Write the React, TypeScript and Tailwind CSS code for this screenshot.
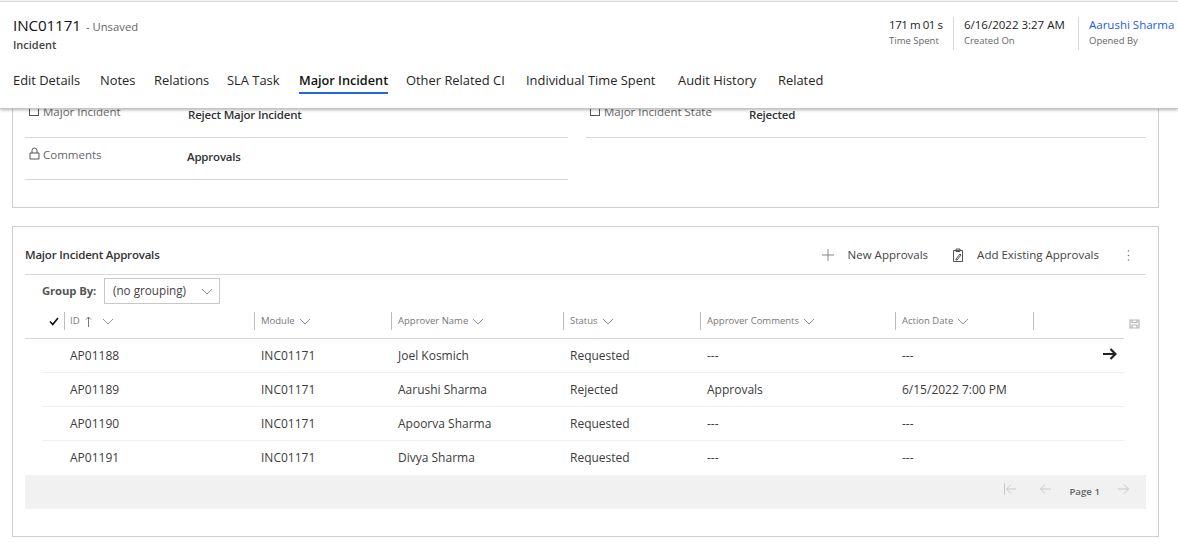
import React from "react";

const F = "font-['Open_Sans','Noto_Sans',sans-serif]";

const Chev = ({ c = "text-[#8a8886]" }: { c?: string }) => (
  <svg width="12" height="7" viewBox="0 0 12 7" className={c} fill="none" stroke="currentColor" strokeWidth="0.9">
    <path d="M1 1l5 5 5-5" />
  </svg>
);

const tabs = ["Edit Details", "Notes", "Relations", "SLA Task", "Major Incident", "Other Related CI", "Individual Time Spent", "Audit History", "Related"];
const tabW = ["w-[87px]", "w-[54px]", "w-[73px]", "w-[72px]", "w-[107px]", "w-[120px]", "w-[152px]", "w-[100px]", "w-[60px]"];

const cols = [
  { n: "Module", w: "w-[137px]" },
  { n: "Approver Name", w: "w-[172px]" },
  { n: "Status", w: "w-[137px]" },
  { n: "Approver Comments", w: "w-[195px]" },
  { n: "Action Date", w: "w-[138px]" },
];

const rows = [
  ["AP01188", "INC01171", "Joel Kosmich", "Requested", "---", "---"],
  ["AP01189", "INC01171", "Aarushi Sharma", "Rejected", "Approvals", "6/15/2022 7:00 PM"],
  ["AP01190", "INC01171", "Apoorva Sharma", "Requested", "---", "---"],
  ["AP01191", "INC01171", "Divya Sharma", "Requested", "---", "---"],
];
const rowW = ["w-[212px] pl-[28px]", "w-[137px] pl-[7px]", "w-[172px] pl-[7px]", "w-[137px] pl-[7px]", "w-[195px] pl-[7px]", "w-[138px] pl-[7px]"];

const Stat = ({ top, sub, blue, w, tight }: { top: string; sub: string; blue?: boolean; w: string; tight?: boolean }) => (
  <div className={`${w} h-[33px] pl-[10px] border-l border-[#d8d8d8] first:border-l-0 first:pl-0`}>
    <div className={`text-[11.5px] leading-[16px] whitespace-nowrap ${tight ? "tracking-[-0.45px] font-medium" : ""} ${blue ? "text-[#1a5ce8]" : "text-[#1b1b1b]"}`}>{top}</div>
    <div className="text-[9.5px] leading-[14px] mt-[1px] text-[#666] whitespace-nowrap">{sub}</div>
  </div>
);

const Arrow = ({ dir, bar }: { dir: "l" | "r"; bar?: boolean }) => (
  <svg width="13" height="12" viewBox="0 0 13 12" fill="none" stroke="#c8c8c8" strokeWidth="1" className="-mt-[6px]">
    {dir === "l" ? <path d={bar ? "M0.5 0.5v11M12 6H3M7 1.5L2.5 6 7 10.5" : "M12 6H1.5M6 1.5L1.5 6 6 10.5"} /> : <path d="M1 6h10.5M7 1.5L11.5 6 7 10.5" />}
  </svg>
);

export default function App() {
  return (
    <div className={`${F} w-[1178px] h-[546px] overflow-hidden bg-white flex flex-col antialiased`}>
      <header className="relative z-10 h-[108px] shrink-0 bg-white border-t border-[#d9d9d9] mt-[1px] border-b-[1px] border-b-[#c4c4c4] shadow-[0_1px_3px_rgba(0,0,0,0.3)]">
        <div className="flex justify-between h-[62px]">
          <div className="pl-[13px] pt-[12px]">
            <div className="flex items-baseline">
              <span className="text-[15.2px] leading-[22px] font-medium tracking-[-0.1px] text-[#111]">INC01171</span>
              <span className="text-[11.3px] ml-[5px] text-[#666]">- Unsaved</span>
            </div>
            <div className="text-[11px] leading-[14px] mt-[2px] font-semibold text-[#444]">Incident</div>
          </div>
          <div className="flex pt-[15px]">
            <Stat top="171 m 01 s" sub="Time Spent" w="w-[64px]" tight />
            <Stat top="6/16/2022 3:27 AM" sub="Created On" w="w-[125px]" />
            <Stat top="Aarushi Sharma" sub="Opened By" blue w="w-[100px]" />
          </div>
        </div>
        <nav className="flex pl-[13px] h-[34px]">
          {tabs.map((t, i) => (
            <div key={t} className={`${tabW[i]} shrink-0 h-[30px] leading-[33px] text-[12.9px] whitespace-nowrap ${i === 4 ? "text-[#111] font-semibold" : "text-[#252525]"}`}>
              <span className={`inline-block h-[30px] ${i === 4 ? "border-b-2 border-[#2266e3] text-[12.7px]" : ""}`}>{t}</span>
            </div>
          ))}
        </nav>
      </header>

      <main className="flex-1 -mt-[40px]">
        <section className="ml-[12px] w-[1147px] h-[139px] border border-[#cfcfcf] pt-[29px] px-[12px]">
          <div className="flex">
            <div className="w-[543px] shrink-0">
              <div className="h-[39px] border-b border-[#d8d8d8] flex items-start pt-[5px] pl-[4px]">
                <span className="w-[10px] h-[9px] border border-[#555] mt-[3px] mr-[4px]" />
                <span className="w-[145px] -mt-[1px] text-[11.5px] text-[#666]">Major Incident</span>
                <span className="text-[11.5px] font-semibold text-[#333] mt-[2px] tracking-[-0.2px]">Reject Major Incident</span>
              </div>
              <div className="h-[42px] border-b border-[#d8d8d8] flex items-start pt-[8px] pl-[4px]">
                <svg width="11" height="13" viewBox="0 0 11 13" fill="none" stroke="#555" className="mr-[3px] mt-[1px]">
                  <path d="M1 6h9v6H1zM3 6V3.5a2.5 2.5 0 015 0V6" />
                </svg>
                <span className="w-[144px] text-[11.5px] text-[#666]">Comments</span>
                <span className="text-[11.5px] font-semibold text-[#333] mt-[2px] tracking-[-0.2px]">Approvals</span>
              </div>
            </div>
            <div className="ml-[18px] w-[560px] h-[39px] border-b border-[#d8d8d8] flex items-start pt-[5px] pl-[4px]">
              <span className="w-[10px] h-[9px] border border-[#555] mt-[3px] mr-[4px]" />
              <span className="w-[145px] -mt-[1px] text-[11.5px] text-[#666]">Major Incident State</span>
              <span className="text-[11.5px] font-semibold text-[#333] mt-[2px] tracking-[-0.2px]">Rejected</span>
            </div>
          </div>
        </section>

        <section className="ml-[12px] mt-[18px] w-[1147px] h-[311px] border border-[#cfcfcf] pt-[15px] px-[12px]">
          <div className="h-[33px] pb-[6px] border-b border-[#d8d8d8] flex items-center justify-between">
            <span className="text-[11.5px] font-semibold text-[#333] tracking-[-0.2px]">Major Incident Approvals</span>
            <div className="flex items-center text-[11.5px] text-[#444] pr-[16px]">
              <svg width="12" height="12" viewBox="0 0 12 12" stroke="#8a8886" strokeWidth="1">
                <path d="M6 0v12M0 6h12" />
              </svg>
              <span className="ml-[14px]">New Approvals</span>
              <svg width="12" height="14" viewBox="0 0 12 14" fill="none" stroke="#555" className="ml-[24px]">
                <path d="M1.5 2.5h9v11h-9zM4 1h4v2.5H4zM4 11l4-5 1 1-4 5H4z" />
              </svg>
              <span className="ml-[13px]">Add Existing Approvals</span>
              <svg width="3" height="11" viewBox="0 0 3 11" fill="#777" className="ml-[28px]">
                <circle cx="1.5" cy="1" r="0.8" /><circle cx="1.5" cy="5.5" r="0.8" /><circle cx="1.5" cy="10" r="0.8" />
              </svg>
            </div>
          </div>

          <div className="flex items-center h-[32px] pl-[17px]">
            <span className="w-[62px] text-[11.3px] font-bold text-[#555] tracking-[-0.1px]">Group By:</span>
            <div className="w-[116px] h-[26px] border border-[#c8c8c8] flex items-center justify-between pl-[8px] pr-[6px] text-[11.7px] text-[#444]">
              <span>(no grouping)</span>
              <Chev />
            </div>
          </div>

          <div className="relative">
            <div className="flex h-[32px] items-start pt-[5px] border-b border-[#d8d8d8] w-[1099px]">
              <div className="w-[39px] h-[18px] flex items-center justify-end pr-[5px]">
                <svg width="10" height="9" viewBox="0 0 10 9" fill="none" stroke="#111" strokeWidth="1.6"><path d="M1 4.5L3.8 7.5 9 1" /></svg>
              </div>
              <div className="w-[190px] h-[18px] border-l border-[#bdbdbd] pl-[5px] flex items-center text-[9.5px] text-[#777]">
                <span>ID</span>
                <svg width="7" height="11" viewBox="0 0 7 11" fill="none" stroke="#777" className="ml-[5px]"><path d="M3.5 11V1M1 3.5L3.5 1 6 3.5" /></svg>
                <span className="ml-[10px]"><Chev /></span>
              </div>
              {cols.map((c) => (
                <div key={c.n} className={`${c.w} h-[18px] border-l border-[#bdbdbd] pl-[6px] flex items-center gap-[4px] text-[9.5px] text-[#777] whitespace-nowrap`}>
                  <span>{c.n}</span>
                  <Chev />
                </div>
              ))}
              <div className="w-[91px] h-[18px] border-l border-[#bdbdbd]" />
            </div>
            <svg width="11" height="10" viewBox="0 0 11 10" fill="none" stroke="#b5b5b5" strokeWidth="1.2" className="absolute left-[1104px] top-[12px]">
              <path d="M1 1h9v8H1zM3 1v2.5h5V1M3 9V6h5v3" />
            </svg>
          </div>

          <div className="ml-[17px] w-[1082px]">
            {rows.map((r, i) => (
              <div key={r[0]} className={`relative flex items-center h-[34px] text-[12px] text-[#3b3b3b] whitespace-nowrap ${i < 3 ? "border-b border-[#efefef]" : ""}`}>
                {r.map((v, j) => (
                  <div key={j} className={`${rowW[j]} shrink-0`}>{v}</div>
                ))}
                {i === 0 && (
                  <svg width="14" height="12" viewBox="0 0 14 12" fill="none" stroke="#222" strokeWidth="2.2" className="absolute right-[7px] top-[9px]">
                    <path d="M0 6h12M7.5 1L12.5 6l-5 5" />
                  </svg>
                )}
              </div>
            ))}
          </div>

          <div className="h-[34px] bg-[#f1f1f1] flex items-center justify-end pr-[16px]">
            <Arrow dir="l" bar />
            <span className="ml-[22px] flex"><Arrow dir="l" /></span>
            <span className="ml-[17px] text-[9.7px] font-semibold text-[#666]">Page 1</span>
            <span className="ml-[17px] flex"><Arrow dir="r" /></span>
          </div>
        </section>
      </main>
    </div>
  );
}
